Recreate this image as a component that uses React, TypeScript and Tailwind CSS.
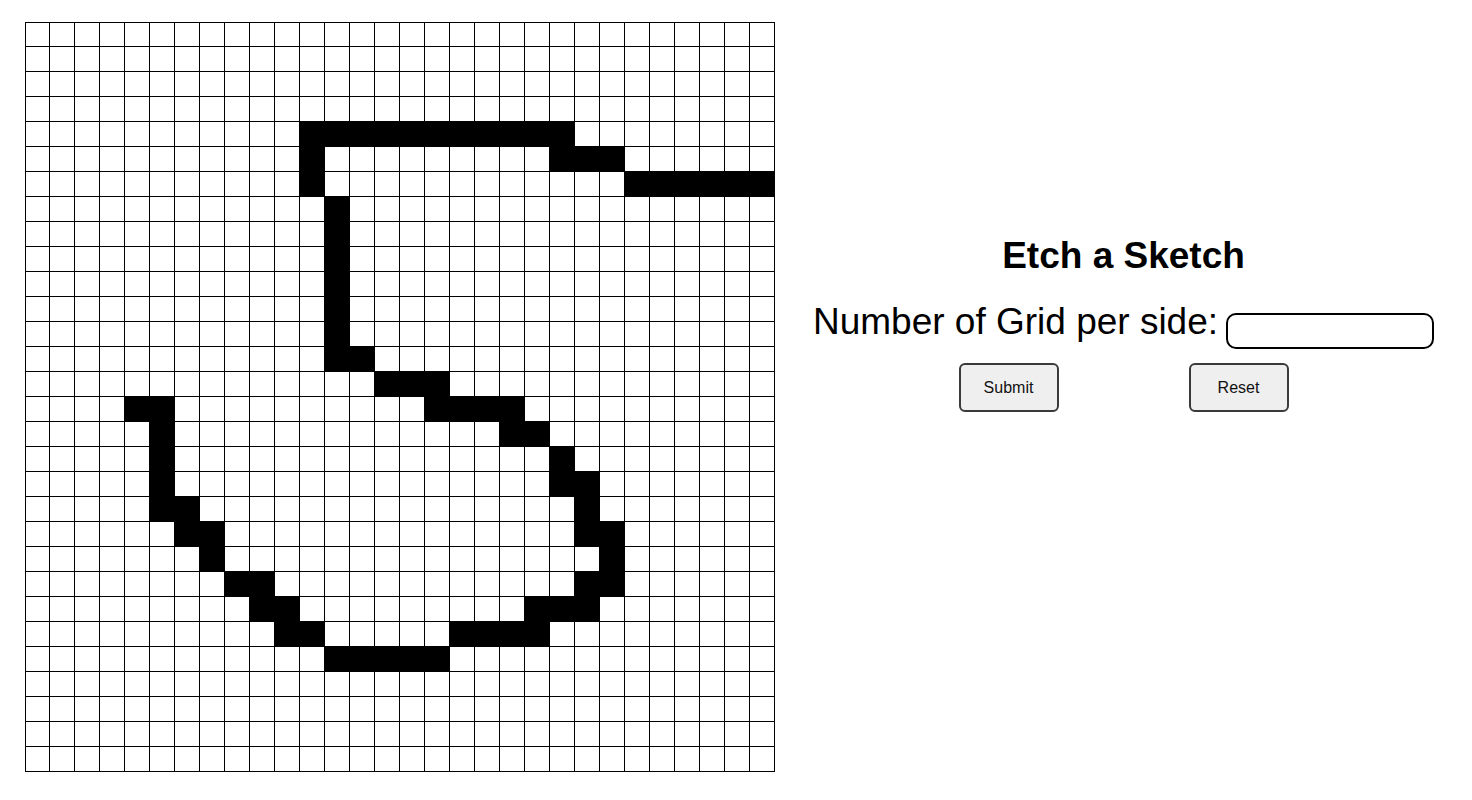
import { useState } from "react";

const SIZE = 30;

// cells that are already drawn, row -> columns
const drawn: Record<number, number[]> = {
  4: [11, 12, 13, 14, 15, 16, 17, 18, 19, 20, 21],
  5: [11, 21, 22, 23],
  6: [11, 24, 25, 26, 27, 28, 29],
  7: [12],
  8: [12],
  9: [12],
  10: [12],
  11: [12],
  12: [12],
  13: [12, 13],
  14: [14, 15, 16],
  15: [4, 5, 16, 17, 18, 19],
  16: [5, 19, 20],
  17: [5, 21],
  18: [5, 21, 22],
  19: [5, 6, 22],
  20: [6, 7, 22, 23],
  21: [7, 23],
  22: [8, 9, 22, 23],
  23: [9, 10, 20, 21, 22],
  24: [10, 11, 17, 18, 19, 20],
  25: [12, 13, 14, 15, 16],
};

const initial = () => {
  const s = new Set<string>();
  Object.entries(drawn).forEach(([r, cols]) => cols.forEach((c) => s.add(`${r}-${c}`)));
  return s;
};

export default function App() {
  const [filled, setFilled] = useState<Set<string>>(initial);
  const [size, setSize] = useState("");

  const paint = (key: string) => {
    if (filled.has(key)) return;
    const next = new Set(filled);
    next.add(key);
    setFilled(next);
  };

  return (
    <div className="flex min-h-screen bg-white font-['Liberation_Sans',Arial,sans-serif] text-black">
      <div className="pl-[25px] pt-[22px]">
        <div className="grid grid-cols-[repeat(30,25px)]">
          {Array.from({ length: SIZE * SIZE }).map((_, i) => {
            const r = Math.floor(i / SIZE);
            const c = i % SIZE;
            const key = `${r}-${c}`;
            return (
              <div
                key={key}
                onMouseEnter={() => paint(key)}
                className={`h-[25px] w-[25px] border-r border-b border-black ${c === 0 ? "border-l" : ""} ${
                  r === 0 ? "border-t" : ""
                } ${filled.has(key) ? "bg-black" : "bg-white"}`}
              />
            );
          })}
        </div>
      </div>

      <div className="flex flex-1 flex-col items-center pt-[235px]">
        <h1 className="text-[37px] font-bold leading-[42px]">Etch a Sketch</h1>
        <div className="mt-[24px] flex items-start gap-[8px]">
          <label className="text-[37px] leading-[42px]">Number of Grid per side:</label>
          <input
            value={size}
            onChange={(e) => setSize(e.target.value)}
            className="mt-[12px] h-[36px] w-[208px] rounded-[10px] border-2 border-black bg-white px-2 text-base outline-none"
          />
        </div>
        <div className="mt-[14px] flex gap-[130px]">
          <button className="h-[49px] w-[100px] rounded-[6px] border-2 border-[#3a3a3a] bg-[#efefef] text-base text-[#111]">
            Submit
          </button>
          <button
            onClick={() => setFilled(new Set())}
            className="h-[49px] w-[100px] rounded-[6px] border-2 border-[#3a3a3a] bg-[#efefef] text-base text-[#111]"
          >
            Reset
          </button>
        </div>
      </div>
    </div>
  );
}
